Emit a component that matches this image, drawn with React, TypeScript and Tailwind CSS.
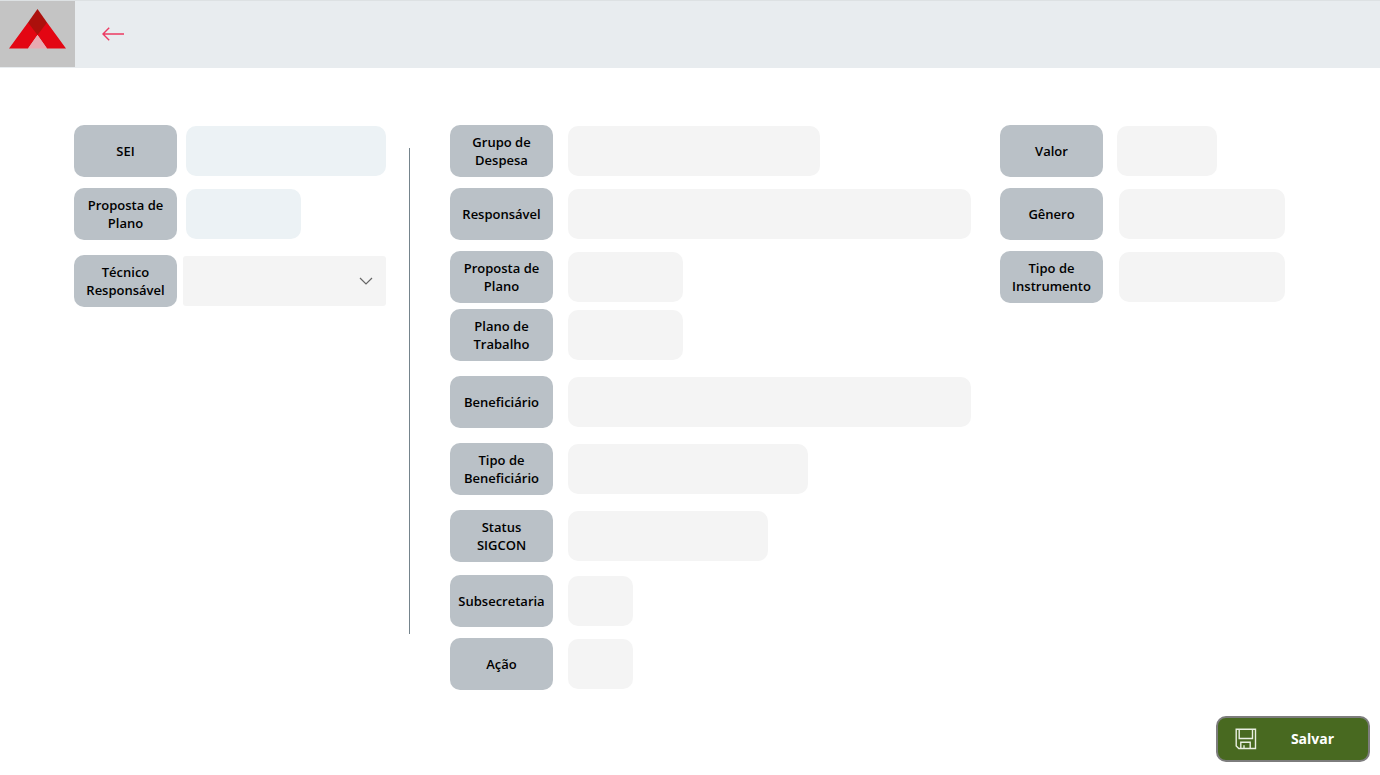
type FieldProps = {
  id: string;
  label: string;
  size: string;
  gap?: string;
  tone?: string;
};

const labelClass =
  'flex h-[52px] w-[103px] shrink-0 items-center justify-center rounded-[10px] bg-[#bac1c7] px-[6px] text-center text-[13px] leading-[18px] font-semibold text-black';

function Field({ id, label, size, gap = 'gap-[15px]', tone = 'bg-[#f4f4f4]' }: FieldProps) {
  return (
    <div className={`flex items-center ${gap}`}>
      <label htmlFor={id} className={labelClass}>
        {label}
      </label>
      <input
        id={id}
        type="text"
        className={`h-[50px] w-full min-w-0 rounded-[10px] px-3 text-sm outline-none focus:ring-2 focus:ring-[#b9c0c6] ${tone} ${size}`}
      />
    </div>
  );
}

function Logo() {
  return (
    <svg viewBox="0 0 75 66" className="h-[66px] w-[75px]" role="img" aria-label="Logo">
      <path d="M28 21.5 47 21.5 66 47.5H47L37.5 34 28 47.5H9Z" fill="#e30613" />
      <path d="M37.5 34 47 47.5H28Z" fill="#e8a9b1" />
      <path d="M37.5 8 47 21.5 37.5 34 28 21.5Z" fill="#ac100c" />
    </svg>
  );
}

function BackArrow() {
  return (
    <svg viewBox="0 0 24 16" className="h-4 w-6" fill="none" stroke="#ec3a62" strokeWidth="1.4" aria-hidden="true">
      <path d="M23 8H2M8.2 1.8 2 8l6.2 6.2" />
    </svg>
  );
}

function SaveIcon() {
  return (
    <svg viewBox="0 0 22 22" className="h-[22px] w-[22px]" fill="none" stroke="#e9efe2" strokeWidth="1.4" aria-hidden="true">
      <path d="M1.2 1.2H20.5V20.5H3.8L1.2 18Z" />
      <path d="M4.2 1.2V10.5H17.5V1.2" />
      <path d="M5.8 20.5V14.2H15.2V20.5M9 20.5V17.2" />
    </svg>
  );
}

export default function App() {
  return (
    <div className="flex min-h-screen flex-col bg-white font-['Open_Sans',sans-serif]">
      <header className="flex h-[68px] items-center border-t border-b border-t-[#dde1e3] border-b-[#e8ecef] bg-[#e8ecef]">
        <div className="flex h-full w-[75px] items-start bg-[#c4c4c4]">
          <Logo />
        </div>
        <button type="button" aria-label="Voltar" className="ml-[26px] flex cursor-pointer items-center">
          <BackArrow />
        </button>
      </header>

      <form className="flex flex-1 flex-col" onSubmit={(e) => e.preventDefault()}>
        <div className="flex items-start pt-[57px] pr-[95px] pl-[74px]">
          <section className="flex min-w-0 flex-[313_1_0%] flex-col">
            <Field id="sei" label="SEI" size="max-w-[200px]" gap="gap-[9px]" tone="bg-[#ecf2f5]" />
            <div className="mt-[11px]">
              <Field id="proposta" label="Proposta de Plano" size="max-w-[115px]" gap="gap-[9px]" tone="bg-[#ecf2f5]" />
            </div>
            <div className="mt-[15px] flex items-center gap-[6px]">
              <label htmlFor="tecnico" className={labelClass}>
                Técnico Responsável
              </label>
              <div className="relative w-full max-w-[203px] min-w-0">
                <select
                  id="tecnico"
                  className="block h-[50px] w-full appearance-none rounded-[3px] bg-[#f4f4f4] pr-10 pl-3 text-sm outline-none focus:ring-2 focus:ring-[#b9c0c6]"
                >
                  <option value=""></option>
                </select>
                <svg
                  viewBox="0 0 14 8"
                  className="pointer-events-none absolute top-[21px] right-[13px] h-2 w-[14px]"
                  fill="none"
                  stroke="#666666"
                  strokeWidth="1.2"
                  aria-hidden="true"
                >
                  <path d="M1 1 7 7l6-6" />
                </svg>
              </div>
            </div>
          </section>

          <div className="mt-[23px] mr-[40px] ml-[22px] w-px shrink-0 self-stretch pb-14">
            <div className="h-full w-px bg-[#75848c]" />
          </div>

          <section className="flex min-w-0 flex-[521_1_0%] flex-col">
            <div className="flex flex-col gap-[11px]">
              <Field id="grupo" label="Grupo de Despesa" size="max-w-[252px]" />
              <Field id="responsavel" label="Responsável" size="max-w-[403px]" />
              <Field id="proposta-plano" label="Proposta de Plano" size="max-w-[115px]" />
            </div>
            <div className="mt-[6px] flex flex-col gap-[15px]">
              <Field id="plano-trabalho" label="Plano de Trabalho" size="max-w-[115px]" />
              <Field id="beneficiario" label="Beneficiário" size="max-w-[403px]" />
              <Field id="tipo-beneficiario" label="Tipo de Beneficiário" size="max-w-[240px]" />
              <Field id="status" label="Status SIGCON" size="max-w-[200px]" />
            </div>
            <div className="mt-[13px] flex flex-col gap-[11px]">
              <Field id="subsecretaria" label="Subsecretaria" size="max-w-[65px]" />
              <Field id="acao" label="Ação" size="max-w-[65px]" />
            </div>
          </section>

          <section className="ml-[29px] flex min-w-0 flex-[285_1_0%] flex-col gap-[11px]">
            <Field id="valor" label="Valor" size="max-w-[100px]" gap="gap-[14px]" />
            <Field id="genero" label="Gênero" size="max-w-[166px]" gap="gap-[16px]" />
            <Field id="instrumento" label="Tipo de Instrumento" size="max-w-[166px]" gap="gap-[16px]" />
          </section>
        </div>

        <footer className="mt-auto flex justify-end pt-[25px] pr-[10px] pb-[13px]">
          <button
            type="submit"
            className="flex h-[46px] w-[154px] cursor-pointer items-center rounded-[10px] border-2 border-[#7d7d7d] bg-[#486920] pl-[17px] text-sm font-bold text-white"
          >
            <SaveIcon />
            <span className="flex-1 text-center">Salvar</span>
          </button>
        </footer>
      </form>
    </div>
  );
}
